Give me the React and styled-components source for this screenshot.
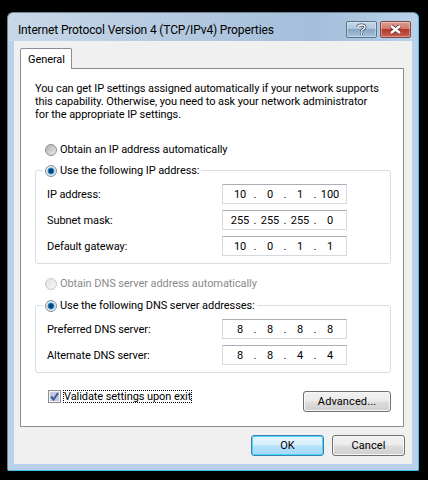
import React from "react";
import styled, { createGlobalStyle } from "styled-components";

const GlobalStyle = createGlobalStyle`
  html, body {
    margin: 0;
    padding: 0;
    background: #000;
  }
  body {
    font-family: Roboto, "Noto Sans", sans-serif;
    font-size: 11px;
    line-height: 14px;
    letter-spacing: -0.08px;
    color: #000;
  }
`;

const Page = styled.div`
  width: 428px;
  height: 480px;
  padding: 12px 0 0 7px;
  box-sizing: border-box;
  overflow: hidden;
  background: #000;
`;

const Window = styled.div`
  width: 412px;
  height: 459px;
  box-sizing: border-box;
  display: flex;
  flex-direction: column;
  padding: 0 6px 6px;
  border: 1px solid #6f8497;
  border-right-color: #3cc4e8;
  border-bottom-color: #3cc4e8;
  border-radius: 6px 6px 2px 2px;
  background:
    linear-gradient(90deg, #c8d8e8 0%, #b4cae0 40%, #a3bedb 75%, #b9d1ea 100%) top / 100% 28px no-repeat,
    #b9d1ea;
`;

const TitleBar = styled.div`
  height: 28px;
  flex: none;
  display: flex;
  align-items: flex-start;
  justify-content: space-between;
`;

const Title = styled.div`
  margin: 10px 0 0 4px;
  font-size: 12px;
  line-height: 14px;
  letter-spacing: -0.14px;
  color: #000;
  white-space: nowrap;
`;

const Caption = styled.div`
  display: flex;
  gap: 3px;
  margin: 8px 1px 0 0;
`;

const CaptionButton = styled.div`
  width: 31px;
  height: 17px;
  box-sizing: border-box;
  display: flex;
  align-items: center;
  justify-content: center;
  border: 1px solid ${(p) => (p.$close ? "#7c4a44" : "#5f7488")};
  border-radius: 2px;
  box-shadow: inset 0 0 0 1px rgba(255, 255, 255, 0.35);
  background: ${(p) =>
    p.$close
      ? "linear-gradient(#dc9d90 0%, #cf7a6c 45%, #b3392b 50%, #c95f50 100%)"
      : "linear-gradient(#c5d6e8 0%, #b0c6dd 45%, #88a6c4 50%, #a6c1dd 100%)"};
`;

const Client = styled.div`
  flex: 1;
  min-height: 0;
  display: flex;
  flex-direction: column;
  padding: 7px 7px 0 6px;
  background: #f0f0f0;
`;

const TabStrip = styled.div`
  display: flex;
  margin: 0 1px -1px 0;
  position: relative;
  z-index: 1;
`;

const Tab = styled.div`
  width: 52px;
  height: 21px;
  box-sizing: border-box;
  padding: 4px 0 0 7px;
  border: 1px solid #898c95;
  border-bottom: none;
  border-radius: 2px 2px 0 0;
  background: #fff;
`;

const Panel = styled.div`
  height: 359px;
  box-sizing: border-box;
  margin-right: 1px;
  padding: 13px 12px 0 14px;
  border: 1px solid #898c95;
  background: #fff;
`;

const Intro = styled.p`
  margin: 0 0 22px;
  line-height: 13px;
  white-space: nowrap;
`;

const Option = styled.label`
  display: flex;
  align-items: center;
  gap: 3px;
  height: 14px;
  margin-left: 10px;
  white-space: nowrap;
  color: ${(p) => (p.$disabled ? "#8a8a8a" : "#000")};
`;

const Radio = styled.span`
  width: 12px;
  height: 12px;
  flex: none;
  box-sizing: border-box;
  border-radius: 50%;
  border: 1px solid ${(p) => (p.$disabled ? "#c8c8c8" : "#8a8f96")};
  background: ${(p) =>
    p.$checked
      ? "radial-gradient(circle, #0a3f6d 0 1.5px, #1f8ad0 3px, #dfe8ee 3.8px)"
      : p.$disabled
        ? "linear-gradient(135deg, #e2e2e2, #f8f8f8)"
        : "linear-gradient(135deg, #b0b0b0, #ececec)"};
`;

const Group = styled.fieldset`
  margin: ${(p) => p.$top}px 0 0;
  padding: 6px 43px 7px 11px;
  min-width: 0;
  border: 1px solid #d5dfe5;
  border-radius: 3px;
`;

const Legend = styled.legend`
  margin-left: -4px;
  padding: 2px 2px 0 2px;
  height: 16px;
  box-sizing: border-box;
`;

const LegendOption = styled(Option)`
  margin-left: 0;
`;

const Fields = styled.div`
  display: flex;
  flex-direction: column;
  gap: 6px;
`;

const FieldRow = styled.div`
  display: flex;
  align-items: center;
  justify-content: space-between;
  height: 20px;
`;

const FieldLabel = styled.span`
  padding-top: 2px;
`;

const IpBox = styled.div`
  width: 125px;
  height: 20px;
  box-sizing: border-box;
  display: flex;
  align-items: center;
  padding: 2px 0 0 5px;
  border: 1px solid #d5dae2;
  border-top-color: #abadb3;
`;

const Octet = styled.span`
  width: 24px;
  text-align: center;
`;

const Dot = styled.span`
  width: 6px;
  text-align: center;
`;

const DnsOption = styled(Option)`
  margin-top: 13px;
`;

const BottomRow = styled.div`
  display: flex;
  align-items: flex-start;
  justify-content: space-between;
  margin: 17px 0 0 13px;
`;

const CheckLabel = styled.label`
  display: flex;
  align-items: center;
  gap: 2px;
  height: 13px;
`;

const CheckBox = styled.span`
  width: 13px;
  height: 13px;
  flex: none;
  box-sizing: border-box;
  display: flex;
  align-items: center;
  justify-content: center;
  border: 1px solid #8e8f8f;
  background: #c4c8dd;
  box-shadow: inset 0 0 0 1px #f4f4f4;
`;

const FocusText = styled.span`
  outline: 1px dotted #000;
  outline-offset: -1px;
  padding: 0 1px;
  line-height: 13px;
  white-space: nowrap;
`;

const Button = styled.div`
  width: ${(p) => p.$width || 73}px;
  height: 21px;
  box-sizing: border-box;
  display: flex;
  align-items: center;
  justify-content: center;
  margin-top: ${(p) => p.$top || 0}px;
  letter-spacing: 0.1px;
  border: 1px solid ${(p) => (p.$primary ? "#3c7fb1" : "#707070")};
  border-radius: 3px;
  box-shadow: inset 0 0 0 1px ${(p) => (p.$primary ? "#48d8fb" : "#f6f6f6")};
  background: ${(p) =>
    p.$primary
      ? "linear-gradient(#e8f6fd 0%, #d5effc 48%, #b3e0f9 52%, #a7d9f5 100%)"
      : "linear-gradient(#f2f2f2 0%, #ebebeb 48%, #dddddd 52%, #cfcfcf 100%)"};
`;

const Footer = styled.div`
  display: flex;
  justify-content: flex-end;
  gap: 8px;
  margin-top: 8px;
`;

function IpField({ parts }) {
  return (
    <IpBox>
      {parts.map((part, i) => (
        <React.Fragment key={i}>
          <Octet>{part}</Octet>
          {i < 3 && <Dot>.</Dot>}
        </React.Fragment>
      ))}
    </IpBox>
  );
}

function Row({ label, parts }) {
  return (
    <FieldRow>
      <FieldLabel>{label}</FieldLabel>
      <IpField parts={parts} />
    </FieldRow>
  );
}

export default function App() {
  return (
    <Page>
      <GlobalStyle />
      <Window>
        <TitleBar>
          <Title>Internet Protocol Version 4 (TCP/IPv4) Properties</Title>
          <Caption>
            <CaptionButton>
              <svg width="11" height="13" viewBox="0 0 11 13">
                <path d="M2 4 C2 1.5 9 1 9 4 C9 6.5 5.5 6 5.5 8.5 M5.5 10 V12" fill="none" stroke="#3d4f60" strokeWidth="3" />
                <path d="M2 4 C2 1.5 9 1 9 4 C9 6.5 5.5 6 5.5 8.5 M5.5 10 V12" fill="none" stroke="#fff" strokeWidth="1.4" />
              </svg>
            </CaptionButton>
            <CaptionButton $close>
              <svg width="15" height="11" viewBox="0 0 15 11">
                <path d="M3 2 L12 9 M12 2 L3 9" fill="none" stroke="#5e2a24" strokeWidth="4" />
                <path d="M3 2 L12 9 M12 2 L3 9" fill="none" stroke="#fff" strokeWidth="2.4" />
              </svg>
            </CaptionButton>
          </Caption>
        </TitleBar>
        <Client>
          <TabStrip>
            <Tab>General</Tab>
          </TabStrip>
          <Panel>
            <Intro>
              You can get IP settings assigned automatically if your network supports
              <br />
              this capability. Otherwise, you need to ask your network administrator
              <br />
              for the appropriate IP settings.
            </Intro>
            <Option>
              <Radio />
              Obtain an IP address automatically
            </Option>
            <Group $top={5}>
              <Legend>
                <LegendOption>
                  <Radio $checked />
                  Use the following IP address:
                </LegendOption>
              </Legend>
              <Fields>
                <Row label="IP address:" parts={["10", "0", "1", "100"]} />
                <Row label="Subnet mask:" parts={["255", "255", "255", "0"]} />
                <Row label="Default gateway:" parts={["10", "0", "1", "1"]} />
              </Fields>
            </Group>
            <DnsOption $disabled>
              <Radio $disabled />
              Obtain DNS server address automatically
            </DnsOption>
            <Group $top={6}>
              <Legend>
                <LegendOption>
                  <Radio $checked />
                  Use the following DNS server addresses:
                </LegendOption>
              </Legend>
              <Fields>
                <Row label="Preferred DNS server:" parts={["8", "8", "8", "8"]} />
                <Row label="Alternate DNS server:" parts={["8", "8", "4", "4"]} />
              </Fields>
            </Group>
            <BottomRow>
              <CheckLabel>
                <CheckBox>
                  <svg width="9" height="9" viewBox="0 0 9 9">
                    <path d="M1 4.5 L3.5 7.5 L8 1" fill="none" stroke="#3a5a9c" strokeWidth="2" />
                  </svg>
                </CheckBox>
                <FocusText>Validate settings upon exit</FocusText>
              </CheckLabel>
              <Button $width={88} $top={1}>Advanced...</Button>
            </BottomRow>
          </Panel>
          <Footer>
            <Button $primary>OK</Button>
            <Button>Cancel</Button>
          </Footer>
        </Client>
      </Window>
    </Page>
  );
}
